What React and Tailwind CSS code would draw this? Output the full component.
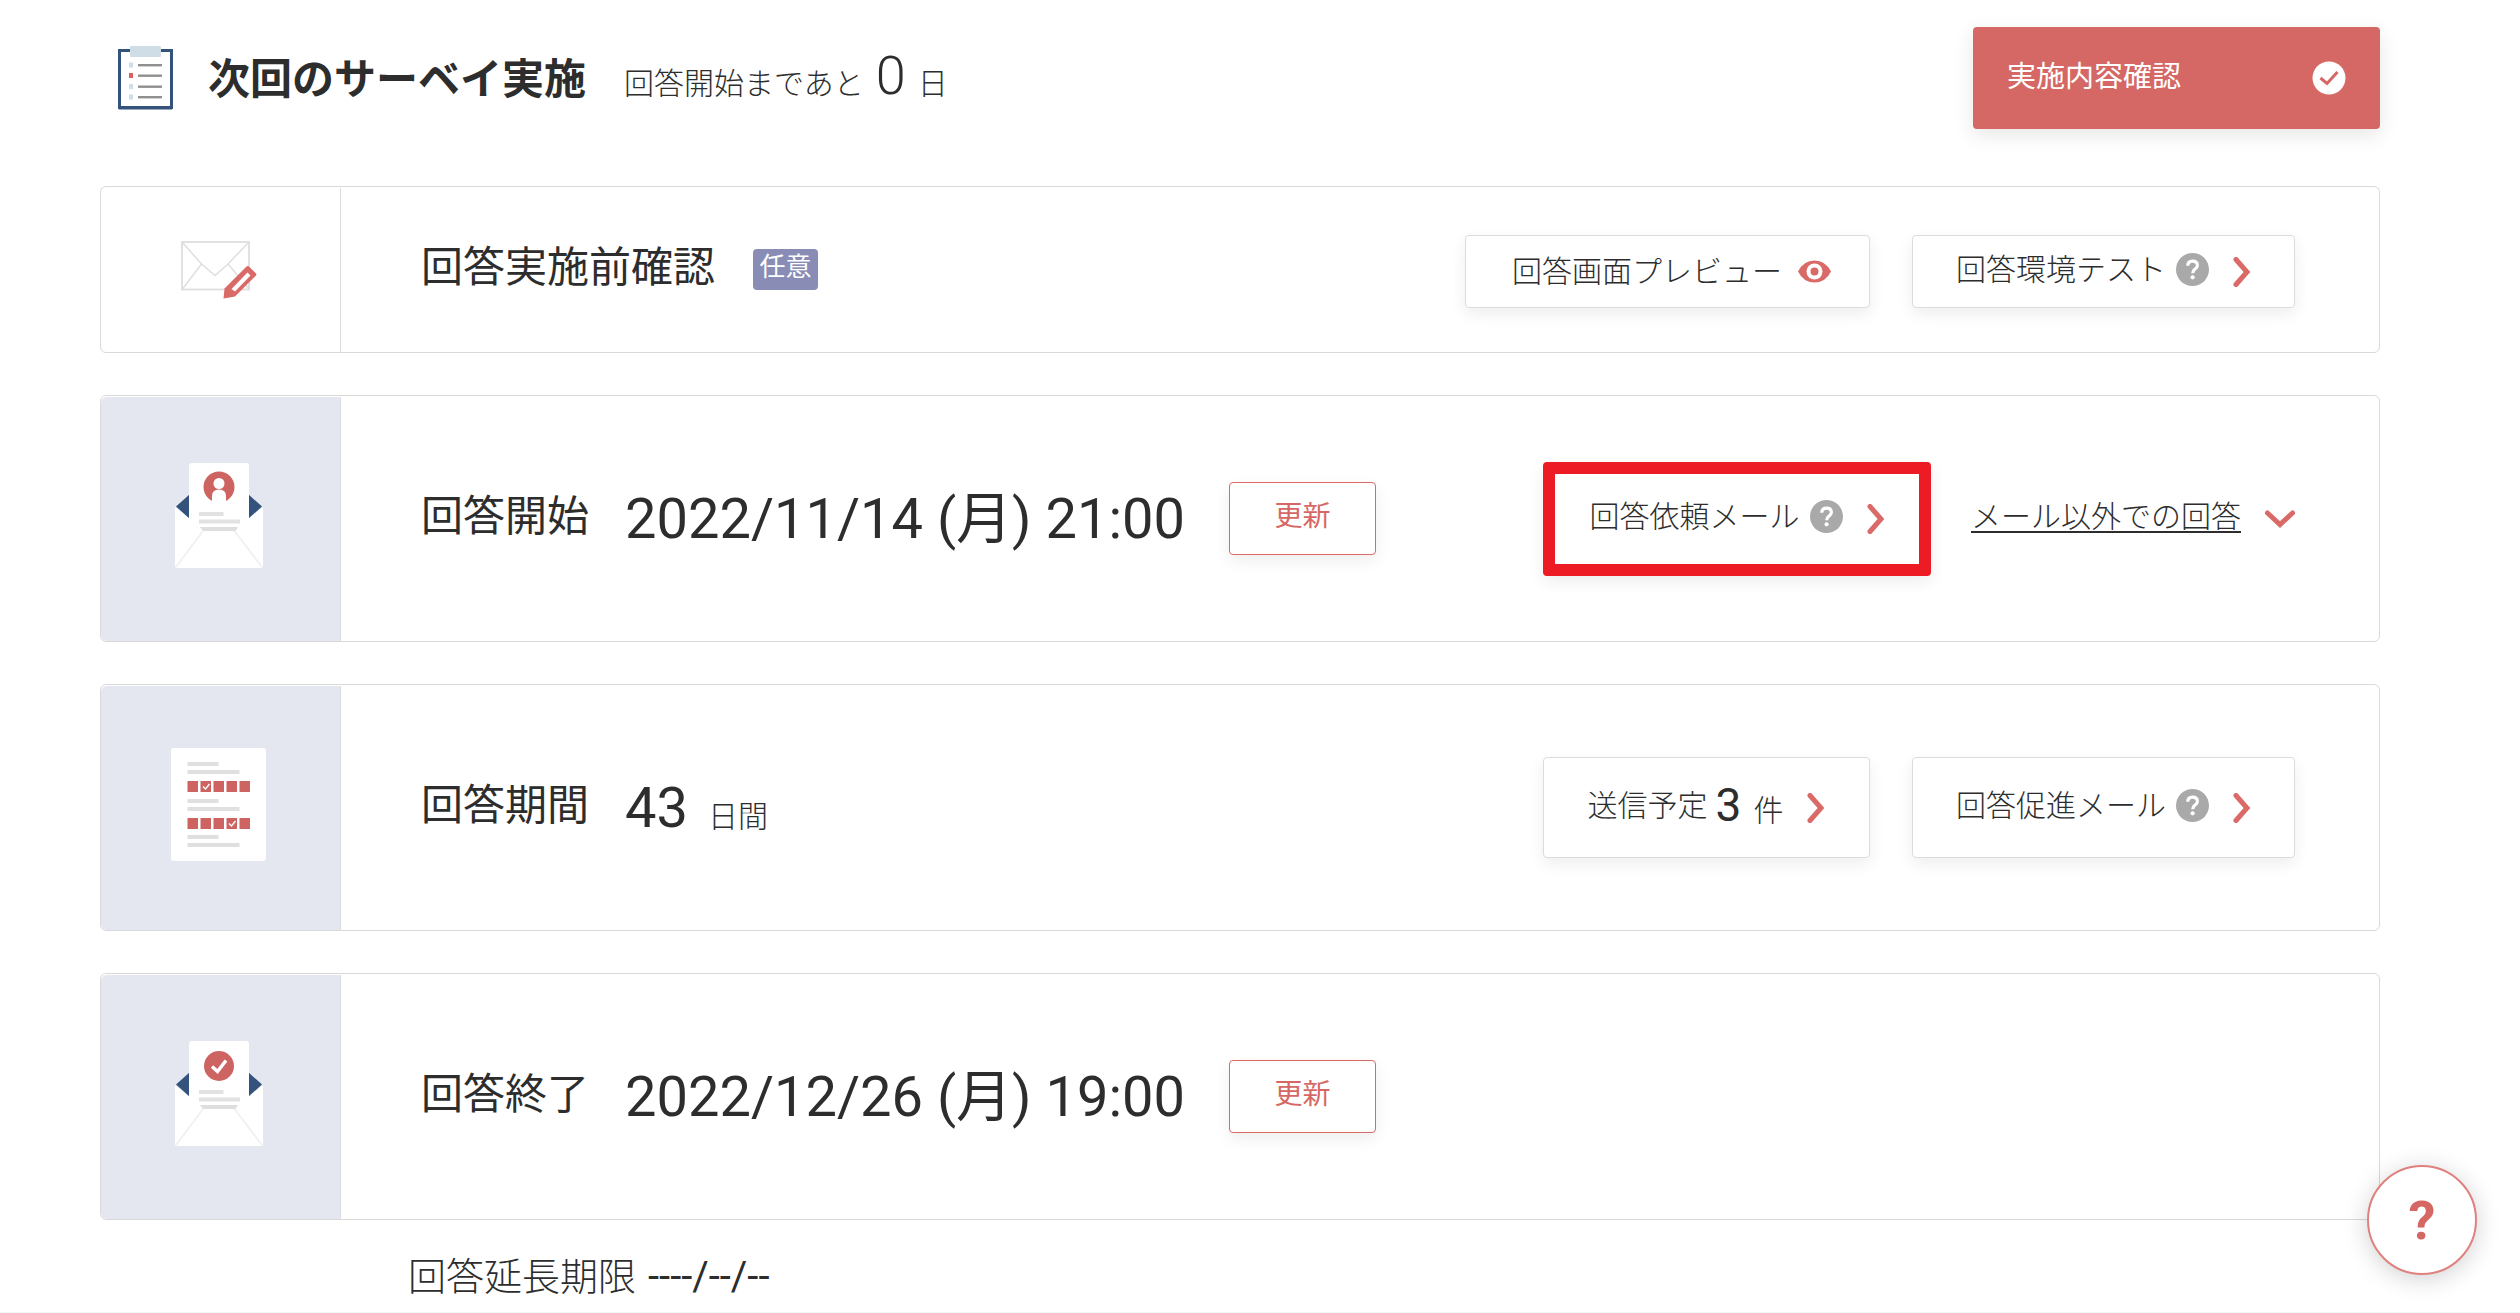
import clsx from "clsx";

function ClipboardIcon() {
  return (
    <svg width="56" height="64" viewBox="0 0 56 64" aria-hidden="true">
      <rect x="1.5" y="4.5" width="52" height="57" fill="#fff" stroke="#34537c" strokeWidth="3" />
      <rect x="1" y="60" width="53" height="3.5" fill="#34537c" />
      <rect x="12" y="0" width="31" height="11" rx="1" fill="#cfdde6" />
      {[19, 29.5, 40.5, 51].map((y, i) => (
        <g key={y}>
          <rect x="11" y={y - 2.5} width="4" height="5" fill={i === 1 ? "#d9605e" : "#cfdde6"} />
          <rect x="20" y={y - 1} width="24" height="2.4" fill="#8f8f8f" />
        </g>
      ))}
    </svg>
  );
}

function EnvelopeEditIcon() {
  return (
    <svg width="76" height="58" viewBox="0 0 76 58" fill="none" aria-hidden="true">
      <g stroke="#dedede" strokeWidth="1.8">
        <rect x="1" y="1" width="67" height="47.5" fill="#fff" />
        <path d="M1.500 1.500 20.500 23 34 34.500 47 23 67.500 1.500M20.500 23 1.500 48M47 23 68 48" strokeWidth="1.4" />
      </g>
      <path
        d="M65.500 25.500Q67 24.500 68.500 26L75 32.500Q75.800 33.600 75 34.600L54 55.500 42.500 57.500 43.500 47.500Z"
        fill="#d96a67"
      />
      <path d="M66.500 31.500 69.500 34.500 54 50.500 50.500 48Z" fill="#fff" />
    </svg>
  );
}

function LetterIcon({ children }) {
  return (
    <svg width="88" height="105" viewBox="0 0 88 105" fill="none" aria-hidden="true">
      <path d="M0 44 15 56H73L88 44V103Q88 105 86 105H2Q0 105 0 103Z" fill="#fff" />
      <path d="M1 43.500 15 31V56ZM87 43.500 73 31V56Z" fill="#34537c" />
      <path d="M14 58V3Q14 0 17 0H71Q74 0 74 3V58Z" fill="#fff" />
      <rect x="24" y="49" width="24.500" height="4" fill="#e2e2e2" />
      <rect x="24" y="56.500" width="41" height="4" fill="#e2e2e2" />
      <path d="M25 64H63L60.500 68H28Z" fill="#dedede" />
      <path d="M1 104 28 68M87 104 59.500 68" stroke="#f1f1f1" strokeWidth="2" />
      {children}
    </svg>
  );
}

function PersonLetterIcon() {
  return (
    <LetterIcon>
      <circle cx="44" cy="24" r="15.500" fill="#cd6462" />
      <circle cx="44" cy="20.500" r="5.500" fill="#fff" />
      <path d="M37 40V33Q37 26.500 44 26.500T51 33V40Z" fill="#fff" />
    </LetterIcon>
  );
}

function DoneLetterIcon() {
  return (
    <LetterIcon>
      <circle cx="44" cy="25" r="15" fill="#cd6462" />
      <path d="M37 25.500 42.500 30.500 51 19.500" stroke="#fff" strokeWidth="3.500" />
    </LetterIcon>
  );
}

function SheetIcon() {
  const boxes = [0, 13, 26, 39, 52];
  return (
    <svg width="96" height="113" viewBox="0 0 96 113" fill="none" aria-hidden="true">
      <rect width="95" height="113" rx="3" fill="#fff" />
      {[14, 51, 87].map((y) => (
        <g key={y} fill="#e0e0e0">
          <rect x="16.500" y={y} width="31" height="4" />
          <rect x="16.500" y={y + 8} width="52" height="4" />
        </g>
      ))}
      {[
        [33, 1],
        [70, 3],
      ].map(([y, checked]) =>
        boxes.map((x, i) => (
          <g key={`${y}-${x}`}>
            <rect x={16.5 + x} y={y} width="10.500" height="11" fill="#cd6462" />
            {i === checked && (
              <path
                d={`M${19 + x} ${y + 5.5}l2.500 2.500 4-5`}
                stroke="#fff"
                strokeWidth="1.400"
              />
            )}
          </g>
        ))
      )}
    </svg>
  );
}

function CheckCircleIcon() {
  return (
    <svg width="34" height="34" viewBox="0 0 34 34" fill="none" aria-hidden="true">
      <circle cx="17" cy="17" r="16.500" fill="#fff" />
      <path d="M8.500 17 15 22.500 25.500 11" stroke="#d56864" strokeWidth="3" />
    </svg>
  );
}

function EyeIcon() {
  return (
    <svg width="33" height="23" viewBox="0 0 33 23" fill="none" aria-hidden="true">
      <path d="M0 11.500Q5.500 0.500 16.500 0.500T33 11.500Q27.500 22.500 16.500 22.500T0 11.500Z" fill="#d96a67" />
      <circle cx="16.500" cy="11.500" r="8" fill="#fff" />
      <circle cx="16.500" cy="11.500" r="4" fill="#d96a67" />
    </svg>
  );
}

function HelpIcon() {
  return (
    <svg width="33" height="33" viewBox="0 0 33 33" fill="none" aria-hidden="true">
      <circle cx="16.500" cy="16.500" r="16.500" fill="#a9a9a9" />
      <path
        d="M11.700 12.800Q11.900 8.200 16.600 8.200T21.400 12.300Q21.400 14.300 19.100 16T16.700 20.200"
        stroke="#fff"
        strokeWidth="3.200"
      />
      <circle cx="16.600" cy="24.300" r="2.100" fill="#fff" />
    </svg>
  );
}

function ChevronIcon({ down = false }) {
  return down ? (
    <svg width="30" height="18" viewBox="0 0 30 18" fill="none" aria-hidden="true">
      <path d="M2.500 3 15 14.500 27.500 3" stroke="#d96a67" strokeWidth="5" strokeLinecap="round" />
    </svg>
  ) : (
    <svg width="18" height="30" viewBox="0 0 18 30" fill="none" aria-hidden="true">
      <path d="M3 2.500 14 15 3 27.500" stroke="#d96a67" strokeWidth="5" strokeLinecap="round" />
    </svg>
  );
}

function ActionButton({ children, className }) {
  return (
    <button
      type="button"
      className={clsx(
        "flex items-center justify-center rounded-sm bg-white text-[30px] leading-10 shadow-[0_6px_16px_rgba(0,0,0,0.07)]",
        className
      )}
    >
      {children}
    </button>
  );
}

function HelpLabel({ children }) {
  return (
    <span className="flex items-center gap-2.5 pb-1">
      {children}
      <HelpIcon />
    </span>
  );
}

function UpdateButton() {
  return (
    <ActionButton className="ml-11 h-[73px] w-[147px] border border-[#d96a67] text-[#d56864]">
      <span className="pb-1 text-[28px]">更新</span>
    </ActionButton>
  );
}

function Card({ icon, plain = false, children }) {
  return (
    <section className="flex rounded-md border border-[#d9d9d9] bg-white">
      <div
        className={clsx(
          "mt-px flex w-60 shrink-0 items-center justify-center rounded-l-md border-r border-[#dcdcdc] pr-1",
          plain ? "" : "bg-[#e4e7ef] pb-2"
        )}
      >
        {icon}
      </div>
      <div
        className={clsx(
          "flex grow items-center pl-20 pr-[84px]",
          plain ? "h-[165px]" : "h-[245px]"
        )}
      >
        {children}
      </div>
    </section>
  );
}

function Label({ children }) {
  return <h2 className="pb-1 text-[42px] leading-[60px]">{children}</h2>;
}

export default function App() {
  return (
    <div className="min-h-screen bg-white font-['Roboto','Noto_Sans_CJK_JP',sans-serif] text-[#2d2d2d]">
      <main className="border-b-2 border-[#f6f6f6] pb-2 pl-[100px] pr-[140px] pt-[27px]">
        <header className="mb-[57px] flex items-center justify-between">
          <div className="flex items-center pl-[18px]">
            <ClipboardIcon />
            <div className="ml-[34px] flex items-baseline pt-1">
              <h1 className="text-[42px] font-bold leading-[60px]">次回のサーベイ実施</h1>
              <p className="ml-[38px] flex items-baseline gap-3 text-[30px] font-light leading-[60px]">
                回答開始まであと
                <span className="text-[54px]">0</span>
                <span>日</span>
              </p>
            </div>
          </div>
          <button
            type="button"
            className="flex h-[102px] w-[407px] items-center justify-between rounded-sm bg-[#d56864] pl-[34px] pr-[34px] text-[29px] text-white shadow-[0_6px_20px_rgba(0,0,0,0.1)]"
          >
            <span>実施内容確認</span>
            <CheckCircleIcon />
          </button>
        </header>

        <div className="flex flex-col gap-[42px]">
          <Card plain icon={<EnvelopeEditIcon />}>
            <Label>回答実施前確認</Label>
            <span className="ml-[38px] flex h-[41px] w-[65px] items-center justify-center rounded-sm bg-[#898cb5] pb-1 text-[26px] text-white">
              任意
            </span>
            <div className="ml-auto flex gap-[42px] pt-1 font-light">
              <ActionButton className="h-[73px] w-[405px] gap-4 border border-[#dcdcdc] pl-2">
                回答画面プレビュー
                <EyeIcon />
              </ActionButton>
              <ActionButton className="h-[73px] w-[383px] gap-6 border border-[#dcdcdc]">
                <HelpLabel>回答環境テスト</HelpLabel>
                <ChevronIcon />
              </ActionButton>
            </div>
          </Card>

          <Card icon={<PersonLetterIcon />}>
            <Label>回答開始</Label>
            <time className="ml-9 text-[56px] leading-[72px]">2022/11/14 (月) 21:00</time>
            <UpdateButton />
            <div className="ml-auto flex items-center gap-10 font-light">
              <ActionButton className="h-[114px] w-[388px] gap-6 border-12 border-[#ed1c24]">
                <HelpLabel>回答依頼メール</HelpLabel>
                <ChevronIcon />
              </ActionButton>
              <a href="#other" className="flex items-center gap-6 text-[30px] leading-10">
                <span className="pb-1 underline decoration-2 underline-offset-4">
                  メール以外での回答
                </span>
                <ChevronIcon down />
              </a>
            </div>
          </Card>

          <Card icon={<SheetIcon />}>
            <Label>回答期間</Label>
            <p className="ml-9 flex items-baseline gap-5 text-[56px] leading-[72px]">
              43
              <span className="text-[30px] font-light leading-10">日間</span>
            </p>
            <div className="ml-auto flex gap-[42px] font-light">
              <ActionButton className="h-[101px] w-[327px] gap-6 border border-[#dcdcdc]">
                <span className="flex items-center gap-2">
                  <span className="pb-1">送信予定</span>
                  <span className="flex items-baseline gap-3">
                    <span className="text-[46px] font-normal">3</span>件
                  </span>
                </span>
                <ChevronIcon />
              </ActionButton>
              <ActionButton className="h-[101px] w-[383px] gap-6 border border-[#dcdcdc]">
                <HelpLabel>回答促進メール</HelpLabel>
                <ChevronIcon />
              </ActionButton>
            </div>
          </Card>

          <Card icon={<DoneLetterIcon />}>
            <Label>回答終了</Label>
            <time className="ml-9 text-[56px] leading-[72px]">2022/12/26 (月) 19:00</time>
            <UpdateButton />
          </Card>
        </div>

        <p className="mt-[30px] flex items-baseline gap-3 pl-[308px] text-[38px] font-light leading-[54px]">
          回答延長期限
          <span className="text-[40px] font-normal">----/--/--</span>
        </p>
      </main>

      <button
        type="button"
        aria-label="ヘルプ"
        className="fixed bottom-[38px] right-[43px] flex size-[110px] items-center justify-center rounded-full border-2 border-[#df817e] bg-white text-[54px] font-bold text-[#d56864] shadow-[0_4px_24px_rgba(0,0,0,0.18)]"
      >
        ?
      </button>
    </div>
  );
}
